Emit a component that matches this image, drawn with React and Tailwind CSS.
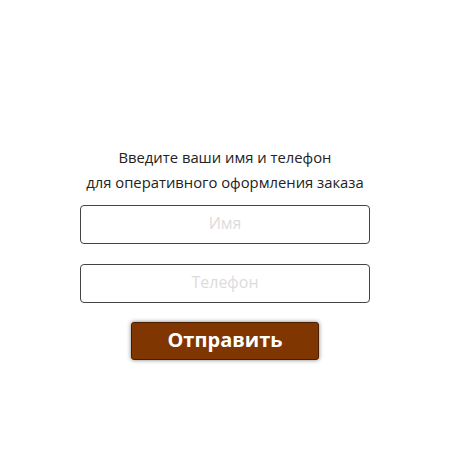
export default function App() {
  return (
    <div className="flex h-[450px] w-[450px] flex-col items-center bg-white pt-[145px] font-['Open_Sans',sans-serif]">
      <p className="text-center text-[14.8px] leading-[25px] text-[#222]">
        Введите ваши имя и телефон
        <br />
        для оперативного оформления заказа
      </p>
      <form className="mt-[10px] flex flex-col items-center" onSubmit={(e) => e.preventDefault()}>
        <input
          type="text"
          placeholder="Имя"
          className="h-[39px] w-[290px] rounded-[4px] border border-[#444] pb-[3px] text-center text-[16px] outline-none placeholder:text-[#dcdcdc]"
        />
        <input
          type="tel"
          placeholder="Телефон"
          className="mt-[20px] h-[39px] w-[290px] rounded-[4px] border border-[#444] pb-[3px] text-center text-[16px] outline-none placeholder:text-[#dcdcdc]"
        />
        <button
          type="submit"
          className="mt-[19px] h-[38px] w-[188px] rounded-[3px] border border-[#4a1e00] bg-[#7f3600] pb-[2px] text-[20px] font-bold text-white shadow-[0_0_4px_rgba(0,0,0,0.5)]"
        >
          Отправить
        </button>
      </form>
    </div>
  )
}
